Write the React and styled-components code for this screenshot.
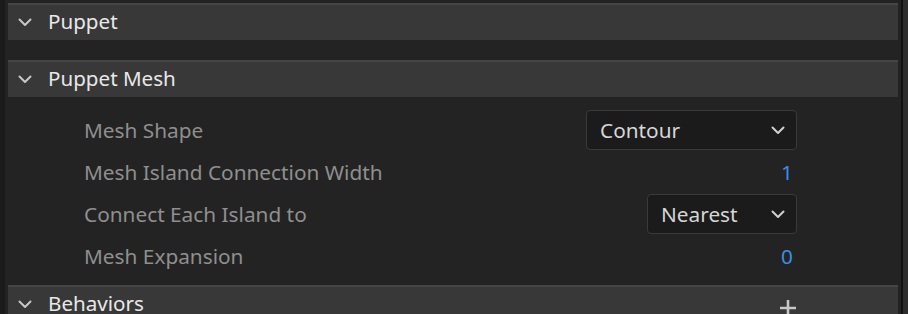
import React from 'react'
import styled, { createGlobalStyle } from 'styled-components'

const colors = {
  page: '#232323',
  gutter: '#1b1b1b',
  header: '#383838',
  headerTop: '#454545',
  headerText: '#e8e8e8',
  label: '#8f8f8f',
  value: '#3b8ee6',
  field: '#1b1b1b',
  fieldBorder: '#3a3a3a',
  fieldText: '#d6d6d6',
}

const GlobalStyle = createGlobalStyle`
  html, body {
    margin: 0;
    padding: 0;
    background: ${colors.page};
  }
  body {
    font-family: 'Noto Sans', 'Open Sans', sans-serif;
    -webkit-font-smoothing: antialiased;
  }
`

const Frame = styled.div`
  display: flex;
  width: 908px;
  height: 314px;
  overflow: hidden;
  background: ${colors.page};
`

const Gutter = styled.div`
  width: 5px;
  margin-right: 3px;
  background: ${colors.gutter};
`

const Panel = styled.div`
  flex: 1;
  display: flex;
  flex-direction: column;
  padding-top: 3px;
`

const ScrollTrack = styled.div`
  width: 10px;
  display: flex;
  padding-left: 3px;
  box-sizing: border-box;
  &::before {
    content: '';
    width: 2px;
    background: #121212;
  }
  &::after {
    content: '';
    flex: 1;
    background: #2e2e2e;
  }
`

const Header = styled.div`
  display: flex;
  align-items: center;
  height: 37px;
  flex-shrink: 0;
  box-sizing: border-box;
  background: ${colors.header};
  border-top: 2px solid ${colors.headerTop};
  padding: 0 101px 0 9px;
  color: ${colors.headerText};
  font-size: 20.6px;
  margin-bottom: ${p => p.gap || 0}px;
`

const Chevron = ({ size = 16, color = 'currentColor', stroke = 2 }) => (
  <svg width={size} height={size} viewBox="0 0 16 16" fill="none">
    <path d="M2.5 5.5 L8 11 L13.5 5.5" stroke={color} strokeWidth={stroke} strokeLinecap="round" strokeLinejoin="round" />
  </svg>
)

const Toggle = styled.span`
  display: flex;
  width: 16px;
  color: #c8c8c8;
  margin-right: 15px;
  margin-top: -2px;
`

const Title = styled.span`
  flex: 1;
  line-height: 1;
  margin-top: -3px;
`

const Plus = styled.span`
  display: flex;
  margin-top: 6px;
`

const Body = styled.div`
  display: flex;
  flex-direction: column;
  padding: 12px 101px 8px 76px;
`

const Row = styled.div`
  display: flex;
  align-items: center;
  justify-content: space-between;
  height: 42px;
`

const Label = styled.span`
  color: ${colors.label};
  font-size: 20.8px;
  margin-top: -1px;
`

const Value = styled.span`
  color: ${colors.value};
  font-size: 20.8px;
  padding-right: 4px;
`

const Select = styled.div`
  display: flex;
  align-items: center;
  justify-content: space-between;
  box-sizing: border-box;
  width: ${p => p.width}px;
  height: 40px;
  padding: 0 10px 0 13px;
  background: ${colors.field};
  border: 1px solid ${colors.fieldBorder};
  border-radius: 4px;
  color: ${colors.fieldText};
  font-size: 20.8px;
`

const rows = [
  { label: 'Mesh Shape', select: 'Contour', width: 211 },
  { label: 'Mesh Island Connection Width', value: '1' },
  { label: 'Connect Each Island to', select: 'Nearest', width: 150 },
  { label: 'Mesh Expansion', value: '0' },
]

export default function App() {
  return (
    <Frame>
      <GlobalStyle />
      <Gutter />
      <Panel>
        <Header gap={20}>
          <Toggle><Chevron /></Toggle>
          <Title>Puppet</Title>
        </Header>
        <Header>
          <Toggle><Chevron /></Toggle>
          <Title>Puppet Mesh</Title>
        </Header>
        <Body>
          {rows.map(r => (
            <Row key={r.label}>
              <Label>{r.label}</Label>
              {r.select ? (
                <Select width={r.width}>
                  <span>{r.select}</span>
                  <Chevron size={16} color="#d0d0d0" />
                </Select>
              ) : (
                <Value>{r.value}</Value>
              )}
            </Row>
          ))}
        </Body>
        <Header>
          <Toggle><Chevron /></Toggle>
          <Title>Behaviors</Title>
          <Plus>
            <svg width="18" height="18" viewBox="0 0 18 18">
              <path d="M9 1 V17 M1 9 H17" stroke="#c8c8c8" strokeWidth="2.6" />
            </svg>
          </Plus>
        </Header>
      </Panel>
      <ScrollTrack />
    </Frame>
  )
}
